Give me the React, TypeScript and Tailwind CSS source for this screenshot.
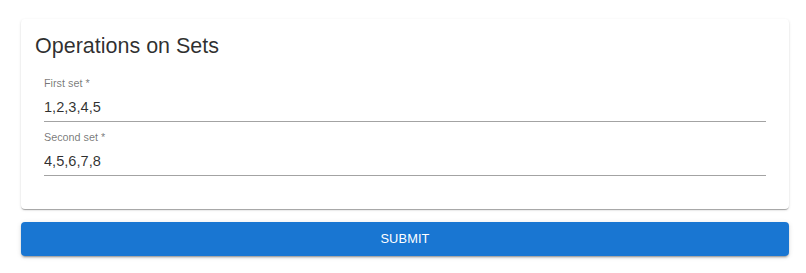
import React, { useState } from 'react';

function SetField({ label, value, onChange }: { label: string; value: string; onChange: (v: string) => void }) {
  return (
    <div className="flex flex-col">
      <label className="text-[10.8px] leading-[13px] text-[rgba(0,0,0,0.55)]">
        {label} *
      </label>
      <input
        type="text"
        value={value}
        onChange={(e) => onChange(e.target.value)}
        className="mt-[7px] h-[25px] text-[14.6px] leading-[20px] text-[rgba(0,0,0,0.82)] outline-none border-b border-[#a3a3a3] bg-transparent pb-[4px]"
      />
    </div>
  );
}

export default function App() {
  const [first, setFirst] = useState('1,2,3,4,5');
  const [second, setSecond] = useState('4,5,6,7,8');

  return (
    <div className="font-['Liberation_Sans',Arial,sans-serif] bg-white w-[806px] h-[273px] pt-[19px] pl-[21px]">
      {/* Card */}
      <div className="w-[768px] h-[190px] rounded-[4px] bg-white shadow-[0_2px_1px_-1px_rgba(0,0,0,0.2),0_1px_1px_0_rgba(0,0,0,0.14),0_1px_3px_0_rgba(0,0,0,0.12)] pt-[13px] pl-[14px]">
        <h2 className="text-[21.5px] leading-[29px] text-[rgba(0,0,0,0.82)]">Operations on Sets</h2>
        <div className="ml-[9px] w-[722px] mt-[16px] flex flex-col gap-[9px]">
          <SetField label="First set" value={first} onChange={setFirst} />
          <SetField label="Second set" value={second} onChange={setSecond} />
        </div>
      </div>

      {/* Submit */}
      <button className="mt-[13px] w-[768px] h-[34px] rounded-[4px] bg-[#1976d2] text-white text-[12.8px] uppercase tracking-[0.01em] flex items-center justify-center shadow-[0_3px_1px_-2px_rgba(0,0,0,0.2),0_2px_2px_0_rgba(0,0,0,0.14),0_1px_5px_0_rgba(0,0,0,0.12)]">
        Submit
      </button>
    </div>
  );
}
